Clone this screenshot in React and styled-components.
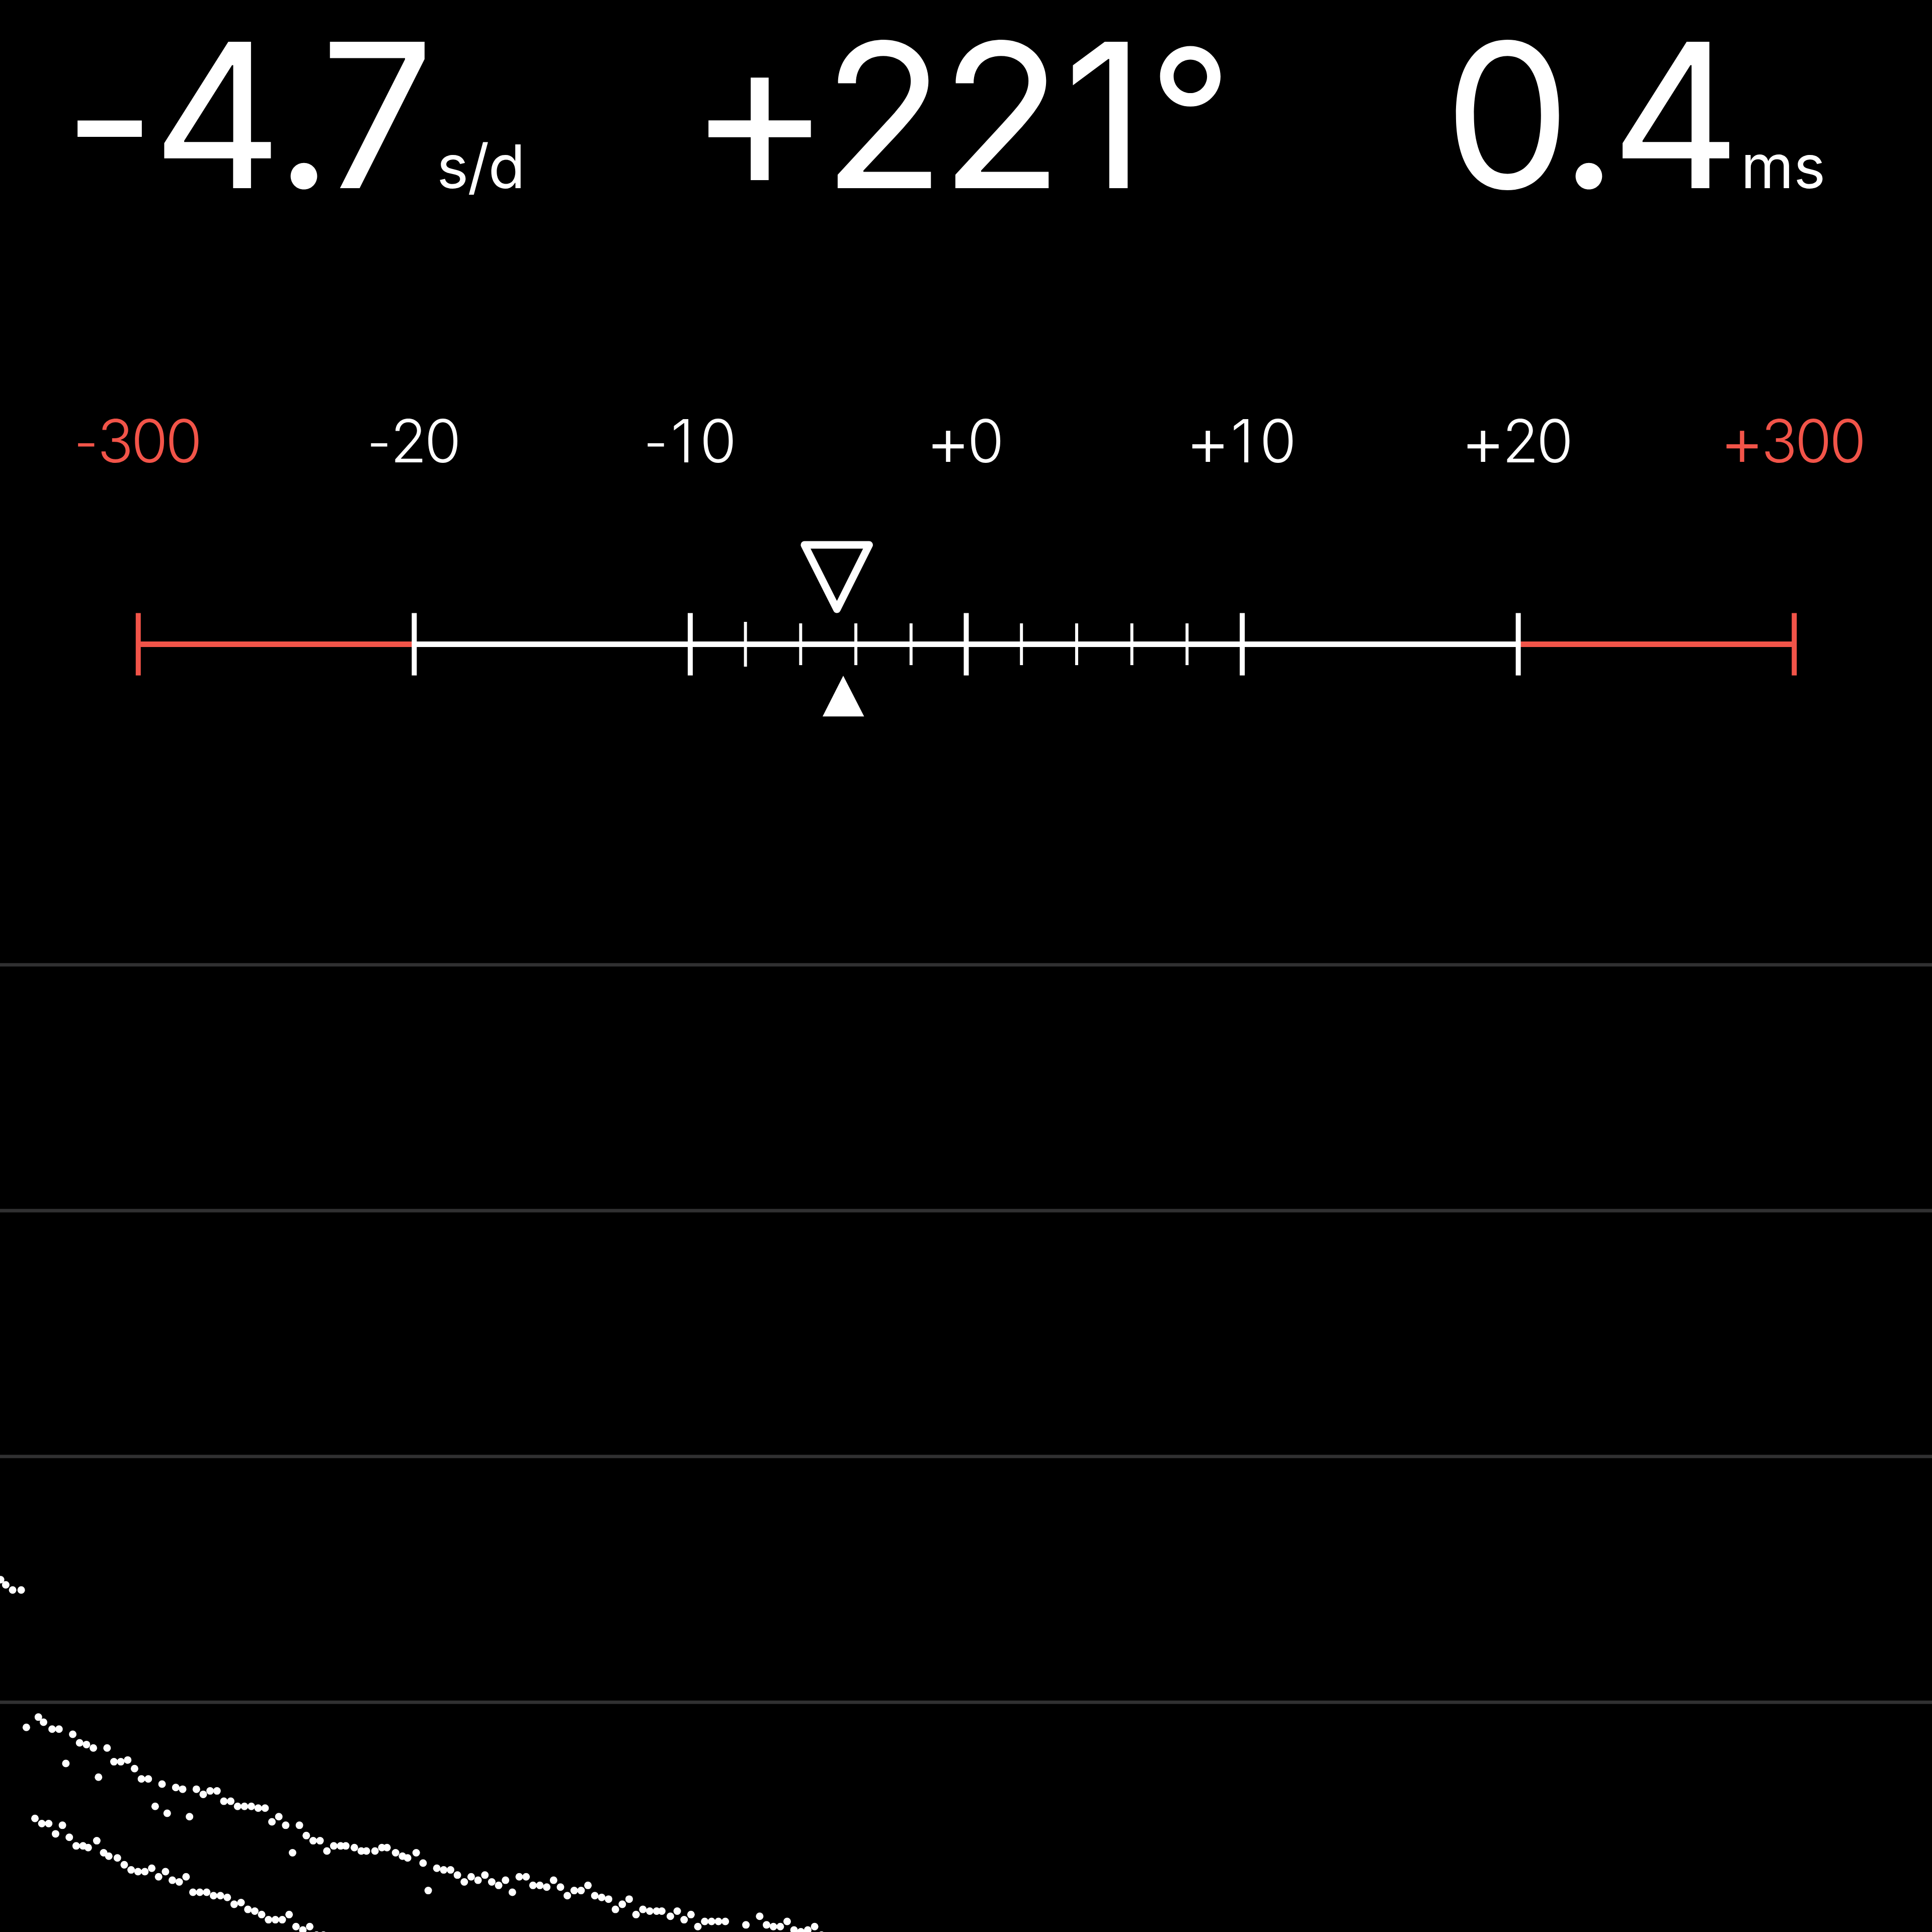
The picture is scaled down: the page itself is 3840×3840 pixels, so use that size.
import styled, { createGlobalStyle } from 'styled-components'

const RED = '#f25449'

const GlobalStyle = createGlobalStyle`
  body {
    margin: 0;
    background: #000;
    color: #fff;
    font-family: Inter, "Liberation Sans", sans-serif;
  }
`

export const Screen = styled.main`
  display: flex;
  flex-direction: column;
  width: 3840px;
  height: 3840px;
  overflow: hidden;
  background: #000;
`

export const Readings = styled.header`
  display: grid;
  grid-template-columns: repeat(3, 1280px);
  height: 455px;
`

export const Reading = styled.div`
  box-sizing: border-box;
  padding-left: ${props => props.$indent}px;
  font-size: 400px;
  line-height: 457px;
  white-space: nowrap;
`

export const Glyph = styled.span`
  font-size: ${props => props.$size || 400}px;
  line-height: 0;
  vertical-align: ${props => -(props.$drop || 0)}px;
  letter-spacing: ${props => props.$gap || 0}px;
`

export const Unit = styled.span`
  font-size: 120px;
  line-height: 0;
  letter-spacing: ${props => props.$spacing || 0}px;
`

export const ScaleLabels = styled.div`
  display: grid;
  grid-template-columns: repeat(7, 1fr);
  margin-top: 351px;
  height: 140px;
`

export const ScaleLabel = styled.span`
  padding-right: ${props => props.$plus ? 9 : 4}px;
  color: ${props => props.$limit ? RED : '#fff'};
  font-size: 118px;
  font-weight: 300;
  line-height: 140px;
  letter-spacing: -4.5px;
  text-align: center;
  white-space: nowrap;
`

export const Sign = styled.span`
  font-size: ${props => props.$plus ? 137 : 106}px;
  line-height: 0;
  vertical-align: ${props => props.$plus ? -7 : 2}px;
  margin-right: ${props => props.$plus ? -2 : 3}px;
`

// keeps the 1 as wide as the other digits
export const One = styled.span`
  margin: 0 16px 0 7px;
`

export const Gauge = styled.svg`
  display: block;
  width: 3840px;
  height: 954px;
`

export const Chart = styled.svg`
  display: block;
  width: 3840px;
  height: 1940px;
`

const labels = [
  ['-', '300', true],
  ['-', '20'],
  ['-', '10'],
  ['+', '0'],
  ['+', '10'],
  ['+', '20'],
  ['+', '300', true]
]

const STEP = 3840 / 7
const tickX = i => STEP * (i + 0.5)

const minorTicks = [-4, -3, -2, -1, 1, 2, 3, 4]

const gridLines = [561.8, 704.95, 848.1, 991.2]

// beat marks, [x, y]
const beats = [
  [0, 919], [3, 922], [7, 925], [12, 925],

  [15, 1005], [22, 999], [25, 1002], [30, 1006], [34, 1006], [42, 1009], [46, 1014], [50, 1015],
  [54, 1017], [62, 1017], [66, 1025], [70, 1025], [74, 1024], [78, 1029], [82, 1035], [86, 1035],
  [94, 1038], [102, 1040], [106, 1041], [114, 1041], [118, 1044], [122, 1042], [126, 1042],
  [130, 1048], [134, 1048], [138, 1051], [142, 1051], [146, 1051], [150, 1052], [154, 1052],
  [158, 1060], [162, 1057], [166, 1062], [174, 1062], [178, 1068], [182, 1071], [186, 1071],
  [190, 1077], [194, 1074], [198, 1074], [201, 1074], [206, 1075], [210, 1077], [213, 1077],
  [218, 1077], [222, 1075], [225, 1075], [230, 1078], [234, 1080], [237, 1081], [242, 1078],
  [246, 1084], [254, 1087], [258, 1088], [262, 1088], [266, 1091], [270, 1095], [274, 1092],
  [278, 1094], [282, 1091], [286, 1095], [290, 1097], [294, 1094], [298, 1101], [302, 1092],
  [306, 1092], [310, 1097], [314, 1097], [318, 1098], [322, 1094], [326, 1098], [330, 1103],
  [334, 1100], [338, 1100], [342, 1097], [346, 1103], [350, 1104], [354, 1105], [358, 1111],
  [362, 1108], [366, 1105], [370, 1114], [374, 1111], [378, 1112], [382, 1112], [385, 1112],
  [390, 1115], [394, 1112], [398, 1117], [402, 1114], [406, 1121], [410, 1118], [414, 1118],
  [418, 1118], [422, 1118], [434, 1120], [442, 1115], [446, 1120], [450, 1121], [454, 1121],
  [458, 1118], [462, 1123], [466, 1124], [470, 1123], [474, 1121], [478, 1126],

  // strays
  [38, 1026], [57, 1034], [90, 1051], [97, 1055], [110, 1057], [170, 1078], [249, 1100],

  [20, 1058], [24, 1061], [28, 1061], [32, 1067], [36, 1062], [40, 1069], [44, 1074], [48, 1074],
  [51, 1075], [56, 1071], [60, 1078], [63, 1080], [68, 1081], [72, 1085], [76, 1088], [80, 1089],
  [84, 1089], [88, 1087], [92, 1092], [96, 1089], [100, 1094], [104, 1095], [108, 1092],
  [112, 1101], [116, 1101], [120, 1101], [124, 1103], [128, 1103], [132, 1104], [136, 1108],
  [140, 1107], [144, 1111], [148, 1112], [152, 1114], [156, 1117], [160, 1117], [164, 1117],
  [168, 1114], [172, 1121], [176, 1123], [180, 1121], [184, 1126], [188, 1126]
]

function RateGauge () {
  return (
    <Gauge viewBox="0 946 3840 954">
      <g strokeWidth="11">
        <line x1={tickX(0)} x2={tickX(1)} y1="1280.5" y2="1280.5" stroke={RED} />
        <line x1={tickX(1)} x2={tickX(5)} y1="1280.5" y2="1280.5" stroke="#fff" />
        <line x1={tickX(5)} x2={tickX(6)} y1="1280.5" y2="1280.5" stroke={RED} />
      </g>
      {labels.map(([sign, value, limit], i) => (
        <line
          key={sign + value}
          x1={tickX(i) + 0.5} x2={tickX(i) + 0.5} y1="1218.5" y2="1342.5"
          stroke={limit ? RED : '#fff'} strokeWidth="10"
        />
      ))}
      {minorTicks.map(n => (
        <line
          key={n}
          x1={1920.5 + n * STEP / 5} x2={1920.5 + n * STEP / 5}
          y1={n === -4 ? 1236 : 1239} y2={n === -4 ? 1325 : 1322}
          stroke="#fff" strokeWidth="6"
        />
      ))}
      <path d="M1599 1083 H1727.5 L1663.5 1211 Z" fill="none" stroke="#fff" strokeWidth="15" strokeLinejoin="round" />
      <path d="M1676 1343 L1717.5 1424 H1635 Z" fill="#fff" />
    </Gauge>
  )
}

function BeatChart () {
  return (
    <Chart viewBox="0 556.64 1125 568.36" preserveAspectRatio="none">
      {gridLines.map(y => (
        <line key={y} x1="0" x2="1125" y1={y} y2={y} stroke="#303031" strokeWidth="2" />
      ))}
      <g fill="#fff" transform="translate(0.35 0.85)">
        {beats.map(([x, y]) => (
          <circle key={`${x}-${y}`} cx={x} cy={y} r="2.2" />
        ))}
      </g>
    </Chart>
  )
}

function App () {
  return (
    <>
    <GlobalStyle />
    <Screen>
      <Readings>
        <Reading $indent={126}>
          <Glyph $drop={6} $gap={-7}>-</Glyph>
          <Glyph $gap={-15}>4</Glyph>
          <Glyph $gap={-25}>.</Glyph>
          <Glyph $gap={5}>7</Glyph>
          <Unit $spacing={-2}>s/d</Unit>
        </Reading>
        <Reading $indent={87}>
          <Glyph $size={432} $drop={5} $gap={-18}>+</Glyph>
          <Glyph $gap={-10}>2</Glyph>
          <Glyph $gap={1}>2</Glyph>
          <Glyph $gap={6}>1</Glyph>
          <Glyph $size={366} $drop={-14}>°</Glyph>
        </Reading>
        <Reading $indent={310}>
          <Glyph $gap={-22}>0</Glyph>
          <Glyph $gap={-14}>.</Glyph>
          <Glyph>4</Glyph>
          <Unit>ms</Unit>
        </Reading>
      </Readings>
      <ScaleLabels>
        {labels.map(([sign, value, limit]) => (
          <ScaleLabel key={sign + value} $limit={limit} $plus={sign === '+'}>
            <Sign $plus={sign === '+'}>{sign}</Sign>
            {value === '10' ? <><One>1</One>0</> : value}
          </ScaleLabel>
        ))}
      </ScaleLabels>
      <RateGauge />
      <BeatChart />
    </Screen>
    </>
  )
}

export default App
